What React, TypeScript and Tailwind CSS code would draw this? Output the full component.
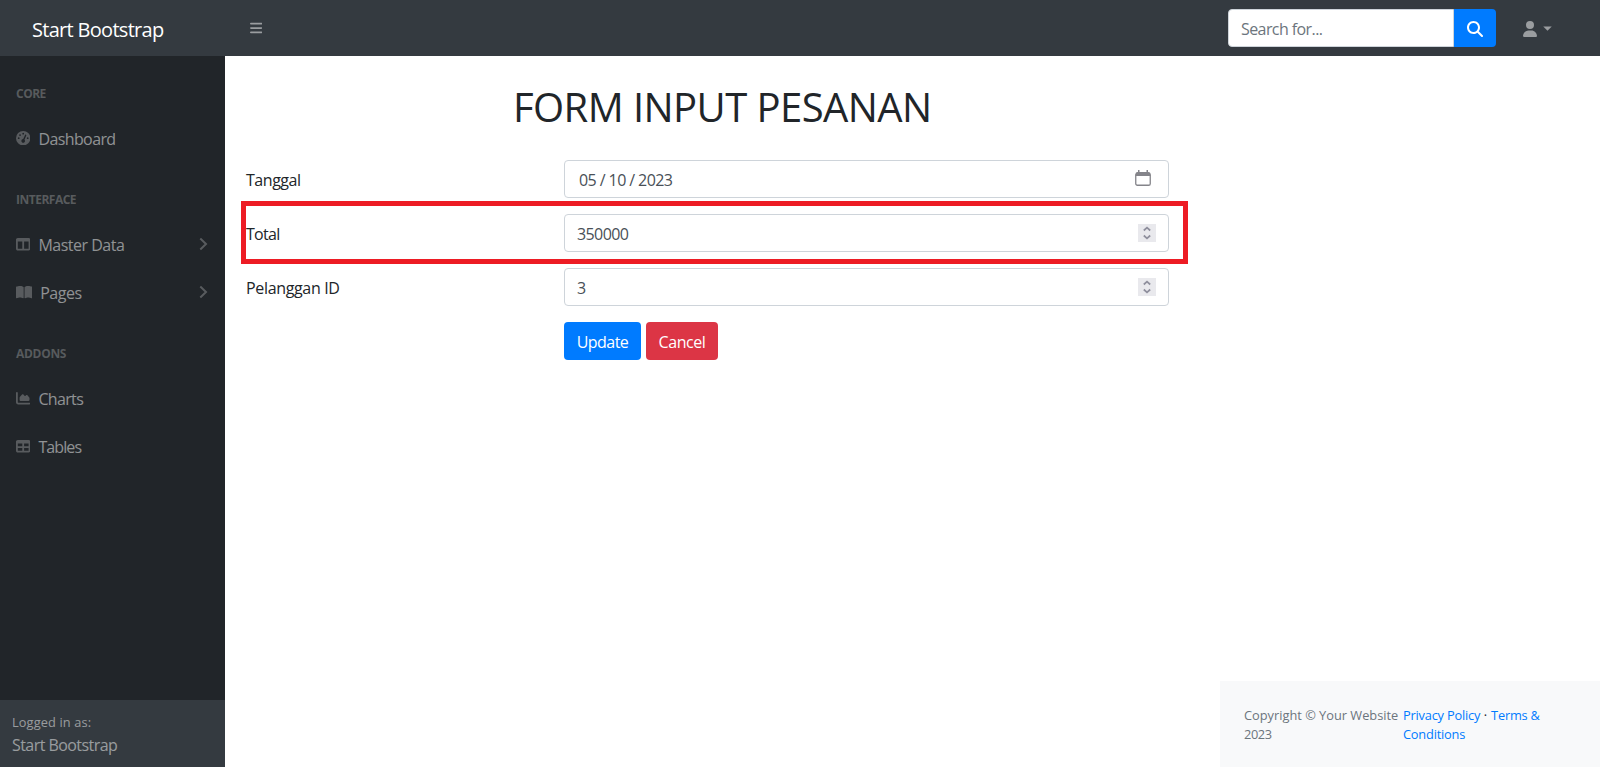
import type { ReactNode } from "react";
import {
  FaBars,
  FaBookOpen,
  FaChartArea,
  FaGaugeHigh,
  FaMagnifyingGlass,
  FaTable,
  FaTableColumns,
  FaUser,
} from "react-icons/fa6";

function Topbar() {
  return (
    <header className="flex h-14 shrink-0 items-center bg-[#343a40]">
      <a className="w-[225px] pt-1 pl-8 text-xl leading-[30px] tracking-[-0.7px] whitespace-nowrap text-white">
        Start Bootstrap
      </a>
      <button className="ml-[25px] text-white/50">
        <FaBars className="h-3.5 w-[12.25px]" />
      </button>
      <div className="ml-auto flex h-[38px] w-[268px]">
        <div className="flex flex-1 items-center rounded-l border border-[#ced4da] bg-white pt-px pl-3 tracking-[-0.58px] text-[#6c757d]">
          Search for...
        </div>
        <button className="flex w-[42px] items-center justify-center rounded-r bg-[#007bff] pt-0.5 text-white">
          <FaMagnifyingGlass className="size-4" />
        </button>
      </div>
      <div className="mr-12 ml-[27px] flex w-[29px] items-center justify-between pt-0.5 text-white/50">
        <FaUser className="h-4 w-3.5" />
        <svg viewBox="0 0 10 5" className="mb-0.5 h-[5px] w-[9px]">
          <path d="M0.3 0.3H9.7L5 5Z" fill="currentColor" />
        </svg>
      </div>
    </header>
  );
}

function Heading({ children }: { children: ReactNode }) {
  return <div className="px-4 pt-[29px] pb-[11px] text-xs leading-[18px] font-bold text-white/25">{children}</div>;
}

function NavLink({ icon, children, arrow }: { icon: ReactNode; children: ReactNode; arrow?: boolean }) {
  return (
    <a className="flex h-12 items-center px-4 text-white/50">
      <span className="mr-2 text-[14.4px] text-white/25">{icon}</span>
      <span className="pt-px">{children}</span>
      {arrow && (
        <svg viewBox="0 0 9 14" className="mr-px ml-auto h-3.5 w-[9px] text-white/25" fill="none">
          <path d="M1.3 1.5L7 7L1.3 12.5" stroke="currentColor" strokeWidth="2" />
        </svg>
      )}
    </a>
  );
}

function Sidebar() {
  return (
    <nav className="flex w-[225px] shrink-0 flex-col bg-[#212529]">
      <div className="flex-1">
        <Heading>
          <span className="tracking-[-0.5px]">CORE</span>
        </Heading>
        <NavLink icon={<FaGaugeHigh />}>
          <span className="tracking-[-0.6px]">Dashboard</span>
        </NavLink>
        <Heading>
          <span className="tracking-[-0.5px]">INTERFACE</span>
        </Heading>
        <NavLink icon={<FaTableColumns />} arrow>
          <span className="tracking-[-0.5px]">Master Data</span>
        </NavLink>
        <NavLink icon={<FaBookOpen className="w-[16.2px]" />} arrow>
          <span className="tracking-[-0.5px]">Pages</span>
        </NavLink>
        <Heading>
          <span className="tracking-[-0.3px]">ADDONS</span>
        </Heading>
        <NavLink icon={<FaChartArea />}>
          <span className="tracking-[-0.65px]">Charts</span>
        </NavLink>
        <NavLink icon={<FaTable />}>
          <span className="tracking-[-0.9px]">Tables</span>
        </NavLink>
      </div>
      <div className="h-[67px] bg-[#343a40] px-3 pt-[13px] text-white/50">
        <div className="text-[12.8px] leading-[19px] tracking-[0.12px]">Logged in as:</div>
        <div className="pt-px leading-6 tracking-[-0.56px]">Start Bootstrap</div>
      </div>
    </nav>
  );
}

function Spinner() {
  return (
    <span className="flex h-[18px] w-[18px] items-center justify-center bg-[#e9e9ed]">
      <svg viewBox="0 0 18 18" className="size-[18px]" fill="none" stroke="#8f8f9d" strokeWidth="1.7">
        <path d="M5.8 6.5L9 3.6L12.2 6.5M5.8 11.5L9 14.4L12.2 11.5" />
      </svg>
    </span>
  );
}

function CalendarIcon() {
  return (
    <svg viewBox="0 0 16 16" className="mr-[5px] size-4 -translate-y-px">
      <path d="M2.500 2H13.500Q15.500 2 15.500 4V6H0.500V4Q0.500 2 2.500 2ZM3 0H4.500V3H3ZM11.500 0H13V3H11.500Z" fill="#84848a" />
      <rect x="0.75" y="3.75" width="14.5" height="11.5" rx="1.6" fill="none" stroke="#84848a" strokeWidth="1.3" />
    </svg>
  );
}

function Row({ label, value, control }: { label: ReactNode; value: ReactNode; control: ReactNode }) {
  return (
    <div className="mb-4 flex h-[38px] items-center">
      <label className="w-[318px] pt-px text-[#212529]">{label}</label>
      <div className="flex h-full w-[605px] items-center justify-between rounded border border-[#ced4da] bg-white px-3 text-[#495057]">
        <span className="pt-px">{value}</span>
        {control}
      </div>
    </div>
  );
}

function OrderForm() {
  return (
    <main className="relative w-[975px] pl-[21px]">
      <h1 className="mt-[27px] mb-[29px] pl-[267px] text-[40px] leading-[48px] tracking-[-0.57px] whitespace-nowrap text-[#212529]">
        FORM INPUT PESANAN
      </h1>
      <Row
        label={<span className="tracking-[-0.46px]">Tanggal</span>}
        value={
          <span className="flex gap-[3.5px] pl-0.5 tracking-[-0.55px]">
            <span>05</span>
            <span>/</span>
            <span>10</span>
            <span>/</span>
            <span>2023</span>
          </span>
        }
        control={<CalendarIcon />}
      />
      <Row
        label={<span className="tracking-[-0.7px]">Total</span>}
        value={<span className="tracking-[-0.6px]">350000</span>}
        control={<Spinner />}
      />
      <Row label={<span className="tracking-[-0.34px]">Pelanggan ID</span>} value="3" control={<Spinner />} />
      <div className="flex gap-[5px] pl-[318px] text-white">
        <button className="h-[38px] w-[77px] rounded bg-[#007bff] pt-px tracking-[-0.55px]">Update</button>
        <button className="h-[38px] w-[72px] rounded bg-[#dc3545] pt-px tracking-[-0.45px]">Cancel</button>
      </div>
      <div className="absolute top-[145px] left-4 h-[63px] w-[947px] border-[5px] border-[#ed1c24]" />
    </main>
  );
}

function Footer() {
  return (
    <footer className="mt-auto ml-auto flex h-[86px] w-[380px] bg-[#f8f9fa] pt-[25px] pl-6 text-[12.8px] leading-[19px]">
      <div className="w-[159px] text-[#6c757d]">
        <span className="whitespace-nowrap">Copyright © Your Website</span>
        <br />
        <span className="tracking-[-0.4px]">2023</span>
      </div>
      <div className="text-[#007bff]">
        <a className="tracking-[-0.2px]">Privacy Policy</a>
        <span className="tracking-[0.3px] text-[#212529]"> · </span>
        <a className="tracking-[-0.2px]">
          Terms &amp;
          <br />
          Conditions
        </a>
      </div>
    </footer>
  );
}

export default function App() {
  return (
    <div className="flex h-[767px] w-[1600px] flex-col overflow-hidden bg-white font-['Open_Sans','Noto_Sans',sans-serif] text-base">
      <Topbar />
      <div className="flex min-h-0 flex-1">
        <Sidebar />
        <div className="flex flex-1 flex-col">
          <OrderForm />
          <Footer />
        </div>
      </div>
    </div>
  );
}
